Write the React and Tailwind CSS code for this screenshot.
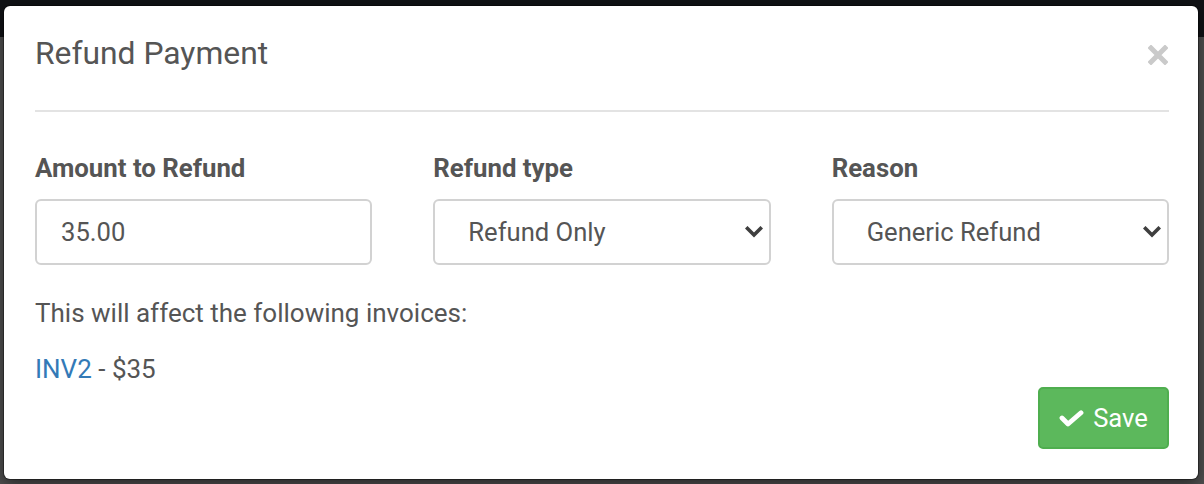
import React, { useState } from "react";

const ChevronDown = () => (
  <svg width="18" height="12" viewBox="0 0 18 12" className="pointer-events-none absolute right-[8px] top-[27px]">
    <polyline points="2.5,2.5 9,9 15.5,2.5" fill="none" stroke="#3f3f3f" strokeWidth="3.6" strokeLinecap="square" />
  </svg>
);

const SelectBox = ({ value, options, onChange }) => (
  <div className="relative">
    <select
      value={value}
      onChange={(e) => onChange(e.target.value)}
      className="h-[66px] w-full appearance-none rounded-[6px] border-2 border-[#d2d2d2] bg-white pl-[33px] text-[25.6px] text-[#555] outline-none"
    >
      {options.map((o) => (
        <option key={o}>{o}</option>
      ))}
    </select>
    <ChevronDown />
  </div>
);

const RefundModal = () => {
  const [amount, setAmount] = useState("35.00");
  const [type, setType] = useState("Refund Only");
  const [reason, setReason] = useState("Generic Refund");

  return (
    <div className="absolute left-[4px] top-[6px] flex h-[473px] w-[1194px] flex-col rounded-[6px] bg-white pl-[31px] pr-[29px] shadow-[0_0_0_1px_rgba(0,0,0,0.35),0_5px_15px_rgba(0,0,0,0.5)]">
      {/* header */}
      <div className="flex items-start justify-between border-b-2 border-[#e3e3e3] pb-[37px] pt-[27px]">
        <h4 className="text-[31.8px] leading-[40px] text-[#555]">Refund Payment</h4>
        <button className="mr-[1px] mt-[12px]">
          <svg width="20" height="20" viewBox="0 0 20 20">
            <path d="M3 3 L17 17 M17 3 L3 17" stroke="#cacaca" strokeWidth="5" strokeLinecap="square" />
          </svg>
        </button>
      </div>

      {/* body */}
      <div className="pt-[38px]">
        <div className="grid grid-cols-3 gap-x-[61px]">
          <div>
            <label className="block text-[25.8px] font-bold leading-[36px] text-[#555]">Amount to Refund</label>
            <input
              value={amount}
              onChange={(e) => setAmount(e.target.value)}
              className="mt-[13px] h-[66px] w-full rounded-[6px] border-2 border-[#d2d2d2] bg-white pl-[24px] text-[25.6px] text-[#555] outline-none"
            />
          </div>
          <div>
            <label className="block text-[25.8px] font-bold leading-[36px] text-[#555]">Refund type</label>
            <div className="mt-[13px]">
              <SelectBox value={type} onChange={setType} options={["Refund Only", "Refund and Void"]} />
            </div>
          </div>
          <div>
            <label className="block text-[25.8px] font-bold leading-[36px] text-[#555]">Reason</label>
            <div className="mt-[13px]">
              <SelectBox value={reason} onChange={setReason} options={["Generic Refund", "Duplicate", "Fraudulent"]} />
            </div>
          </div>
        </div>

        <p className="mt-[30px] text-[26px] leading-[36px] text-[#555]">This will affect the following invoices:</p>
        <p className="mt-[20px] text-[26px] leading-[36px] text-[#555]">
          <a href="#" className="text-[#337ab7]">INV2</a> - $35
        </p>
      </div>

      {/* footer */}
      <div className="flex justify-end">
        <button className="flex h-[62px] w-[131px] items-center justify-center gap-[9px] rounded-[5px] border-2 border-[#4fae4f] bg-[#5cb85c] text-[25.6px] text-white">
          <svg width="25" height="17" viewBox="0 0 25 17">
            <polyline points="3,8 9,14 22,2.8" fill="none" stroke="white" strokeWidth="4.8" strokeLinecap="round" strokeLinejoin="round" />
          </svg>
          Save
        </button>
      </div>
    </div>
  );
};

export default function App() {
  return (
    <div className="relative h-[484px] w-[1204px] overflow-hidden bg-[#4f4f4f] font-['Roboto',sans-serif]">
      <div className="h-[37px] bg-[#101215]" />
      <RefundModal />
    </div>
  );
}
